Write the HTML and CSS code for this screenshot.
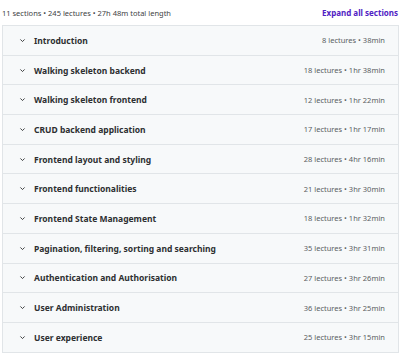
FILE: index.html
```html
<!DOCTYPE html>
<html>
<head>
<meta charset="utf-8">
<link rel="stylesheet" href="styles.css">
</head>
<body>
<div class="curriculum">
  <div class="summary">
    <span class="stats">11 sections • 245 lectures • 27h 48m total length</span>
    <span class="expand">Expand all sections</span>
  </div>
  <div class="sections">
    <div class="row"><span class="chev"><svg viewBox="0 0 10 10" width="7" height="7"><path d="M2 3.5 L5 6.5 L8 3.5" fill="none" stroke="#2d2f31" stroke-width="1.3"/></svg></span><span class="title">Introduction</span><span class="meta">8 lectures • 38min</span></div>
    <div class="row"><span class="chev"><svg viewBox="0 0 10 10" width="7" height="7"><path d="M2 3.5 L5 6.5 L8 3.5" fill="none" stroke="#2d2f31" stroke-width="1.3"/></svg></span><span class="title">Walking skeleton backend</span><span class="meta">18 lectures • 1hr 38min</span></div>
    <div class="row"><span class="chev"><svg viewBox="0 0 10 10" width="7" height="7"><path d="M2 3.5 L5 6.5 L8 3.5" fill="none" stroke="#2d2f31" stroke-width="1.3"/></svg></span><span class="title">Walking skeleton frontend</span><span class="meta">12 lectures • 1hr 22min</span></div>
    <div class="row"><span class="chev"><svg viewBox="0 0 10 10" width="7" height="7"><path d="M2 3.5 L5 6.5 L8 3.5" fill="none" stroke="#2d2f31" stroke-width="1.3"/></svg></span><span class="title">CRUD backend application</span><span class="meta">17 lectures • 1hr 17min</span></div>
    <div class="row"><span class="chev"><svg viewBox="0 0 10 10" width="7" height="7"><path d="M2 3.5 L5 6.5 L8 3.5" fill="none" stroke="#2d2f31" stroke-width="1.3"/></svg></span><span class="title">Frontend layout and styling</span><span class="meta">28 lectures • 4hr 16min</span></div>
    <div class="row"><span class="chev"><svg viewBox="0 0 10 10" width="7" height="7"><path d="M2 3.5 L5 6.5 L8 3.5" fill="none" stroke="#2d2f31" stroke-width="1.3"/></svg></span><span class="title">Frontend functionalities</span><span class="meta">21 lectures • 3hr 30min</span></div>
    <div class="row"><span class="chev"><svg viewBox="0 0 10 10" width="7" height="7"><path d="M2 3.5 L5 6.5 L8 3.5" fill="none" stroke="#2d2f31" stroke-width="1.3"/></svg></span><span class="title">Frontend State Management</span><span class="meta">18 lectures • 1hr 32min</span></div>
    <div class="row"><span class="chev"><svg viewBox="0 0 10 10" width="7" height="7"><path d="M2 3.5 L5 6.5 L8 3.5" fill="none" stroke="#2d2f31" stroke-width="1.3"/></svg></span><span class="title">Pagination, filtering, sorting and searching</span><span class="meta">35 lectures • 3hr 31min</span></div>
    <div class="row"><span class="chev"><svg viewBox="0 0 10 10" width="7" height="7"><path d="M2 3.5 L5 6.5 L8 3.5" fill="none" stroke="#2d2f31" stroke-width="1.3"/></svg></span><span class="title">Authentication and Authorisation</span><span class="meta">27 lectures • 3hr 26min</span></div>
    <div class="row"><span class="chev"><svg viewBox="0 0 10 10" width="7" height="7"><path d="M2 3.5 L5 6.5 L8 3.5" fill="none" stroke="#2d2f31" stroke-width="1.3"/></svg></span><span class="title">User Administration</span><span class="meta">36 lectures • 3hr 25min</span></div>
    <div class="row"><span class="chev"><svg viewBox="0 0 10 10" width="7" height="7"><path d="M2 3.5 L5 6.5 L8 3.5" fill="none" stroke="#2d2f31" stroke-width="1.3"/></svg></span><span class="title">User experience</span><span class="meta">25 lectures • 3hr 15min</span></div>
  </div>
</div>
</body>
</html>
```

FILE: styles.css
```css
html, body {
  margin: 0;
  padding: 0;
  background: #ffffff;
}
body {
  font-family: "Noto Sans", "DejaVu Sans", sans-serif;
  color: #2d2f31;
}
.curriculum {
  width: 397px;
  margin-left: 2px;
}
.summary {
  display: flex;
  justify-content: space-between;
  align-items: center;
  height: 25px;
  padding-right: 1px;
}
.stats {
  font-size: 7.5px;
  color: #3e4143;
}
.expand {
  font-size: 8px;
  font-weight: 700;
  color: #5022c3;
}
.sections {
  border: 1px solid #e1e5e8;
  border-bottom: none;
}
.row {
  display: flex;
  align-items: center;
  height: 28.7px;
  background: #f7f9fa;
  border-bottom: 1px solid #e1e5e8;
  padding: 0 13px 0 16px;
}
.chev {
  display: flex;
  width: 15px;
}
.title {
  flex: 1;
  font-size: 8.5px;
  font-weight: 700;
  color: #2d2f31;
}
.meta {
  font-size: 7.5px;
  color: #5a5e62;
}
```
